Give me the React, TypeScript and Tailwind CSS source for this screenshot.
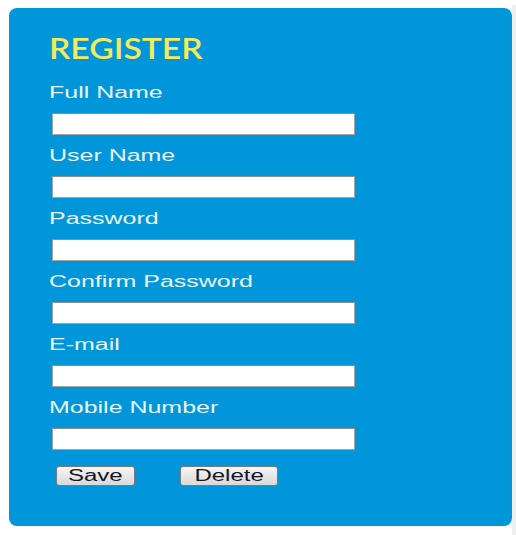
import React from 'react'

// Registration form: blue rounded panel, yellow heading, six labelled text
// inputs and a pair of grey push buttons.

const FIELDS = [
  'Full Name',
  'User Name',
  'Password',
  'Confirm Password',
  'E-mail',
  'Mobile Number',
]

function Label({ children }: { children: React.ReactNode }) {
  return (
    <div className="h-4 text-[16px] leading-4 text-[#eaf5fb] font-['Liberation_Sans',Arial,sans-serif]">
      <span className="inline-block origin-left scale-x-[1.56] whitespace-nowrap">{children}</span>
    </div>
  )
}

function Field({ label }: { label: string }) {
  return (
    <div className="flex flex-col">
      <Label>{label}</Label>
      <input
        type="text"
        aria-label={label}
        className="mt-3 ml-[3px] h-[22px] w-[303px] border border-[#a3a3a3] border-t-[#8c8c8c] bg-white outline-none"
      />
    </div>
  )
}

function PushButton({ children, width }: { children: React.ReactNode; width: string }) {
  return (
    <button
      type="button"
      className={`flex h-5 ${width} items-center justify-center rounded-[3px] border border-[#7a7a7a] bg-gradient-to-b from-[#f6f6f6] to-[#d9d9d9] text-[16px] leading-4 text-[#151525] font-['Liberation_Sans',Arial,sans-serif]`}
    >
      <span className="inline-block scale-x-[1.5]">{children}</span>
    </button>
  )
}

export default function App() {
  return (
    <div className="flex h-[535px] w-[516px] bg-white">
      <div className="ml-[9px] mt-2 h-[518px] w-[503px] rounded-lg bg-[#0096d9] pl-10 pt-[25px]">
        <h1 className="h-[29px] text-[29px] leading-[29px] font-semibold text-[#f4ea5c] font-['Lato',sans-serif]">
          <span className="inline-block origin-left scale-x-[1.16]">REGISTER</span>
        </h1>

        <div className="mt-[23px] flex flex-col gap-[13px]">
          {FIELDS.map((f) => (
            <Field key={f} label={f} />
          ))}
        </div>

        <div className="mt-4 ml-[7px] flex gap-[45px]">
          <PushButton width="w-[79px]">Save</PushButton>
          <PushButton width="w-[98px]">Delete</PushButton>
        </div>
      </div>
      <div className="mt-[5px] h-[530px] w-1 bg-[#eeeeee]" />
    </div>
  )
}
